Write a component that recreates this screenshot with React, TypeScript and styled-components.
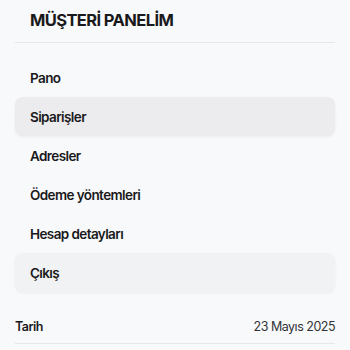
import styled, { createGlobalStyle } from "styled-components";

const GlobalStyle = createGlobalStyle`
  html, body {
    margin: 0;
    padding: 0;
    background: #f8f9fb;
  }
  body {
    font-family: Inter, "Noto Sans", sans-serif;
    color: #1c1c1e;
  }
`;

interface ItemProps {
  $variant?: "active" | "logout";
}

const menu = [
  { id: 1, title: "Pano" },
  { id: 2, title: "Siparişler", variant: "active" as const },
  { id: 3, title: "Adresler" },
  { id: 4, title: "Ödeme yöntemleri" },
  { id: 5, title: "Hesap detayları" },
  { id: 6, title: "Çıkış", variant: "logout" as const },
];

export default function App() {
  return (
    <>
      <GlobalStyle />
      <Panel>
        <Header>
          <Title>MÜŞTERİ PANELİM</Title>
        </Header>
        <Menu>
          {menu.map((item) => (
            <MenuItem key={item.id} $variant={item.variant}>
              {item.title}
            </MenuItem>
          ))}
        </Menu>
        <InfoRow>
          <span className="label">Tarih</span>
          <span className="value">23 Mayıs 2025</span>
        </InfoRow>
      </Panel>
    </>
  );
}

const Panel = styled.div`
  width: 320px;
  padding: 0 15px;
  display: flex;
  flex-direction: column;
`;

const Header = styled.div`
  height: 42px;
  display: flex;
  align-items: center;
  padding: 0 15px;
  border-bottom: 1px solid #e6e7ea;
`;

const Title = styled.h1`
  margin: 0 0 2px;
  font-size: 16.5px;
  font-weight: 700;
  letter-spacing: -0.6px;
  color: #1a1a1c;
`;

const Menu = styled.ul`
  list-style: none;
  margin: 15px 0 0;
  padding: 0;
  display: flex;
  flex-direction: column;
`;

const MenuItem = styled.li<ItemProps>`
  height: 39px;
  display: flex;
  align-items: center;
  padding: 0 15px;
  border-radius: 8px;
  font-size: 13.5px;
  font-weight: 600;
  letter-spacing: -0.6px;
  color: #1a1a1c;
  background: ${(props) =>
    props.$variant === "active"
      ? "#ececee"
      : props.$variant === "logout"
      ? "#f1f2f4"
      : "transparent"};
  box-shadow: ${(props) =>
    props.$variant ? "0 1px 3px rgba(0, 0, 0, 0.06)" : "none"};
`;

const InfoRow = styled.div`
  margin-top: 18px;
  height: 33px;
  display: flex;
  justify-content: space-between;
  align-items: center;
  border-bottom: 1px solid #e6e7ea;
  font-size: 12.5px;
  letter-spacing: -0.5px;

  & .label {
    font-weight: 600;
    color: #1a1a1c;
  }

  & .value {
    color: #333336;
  }
`;
